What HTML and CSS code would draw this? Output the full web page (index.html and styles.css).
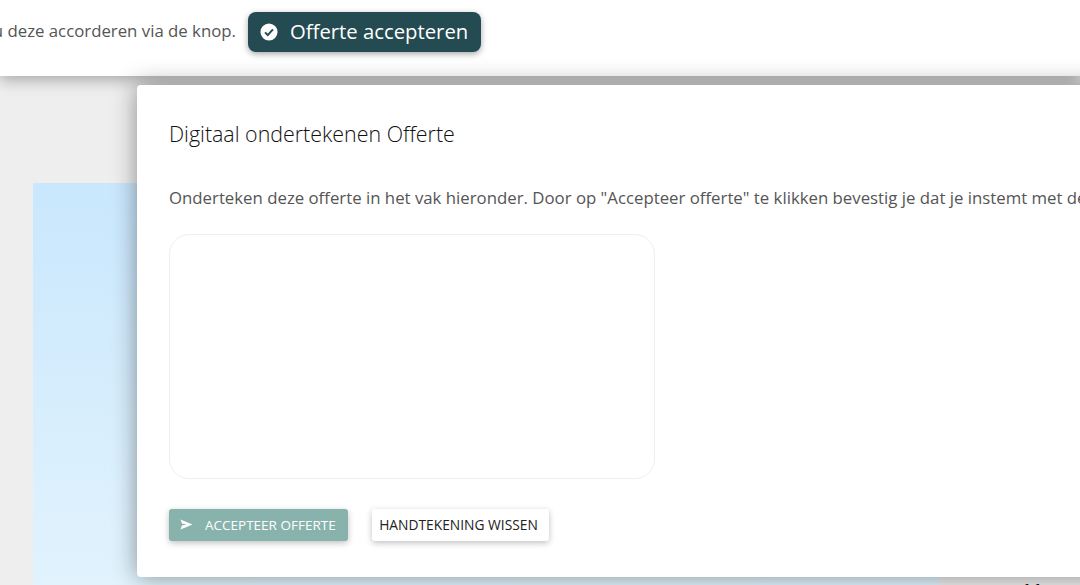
FILE: index.html
```html
<!DOCTYPE html>
<html lang="nl">
<head>
<meta charset="utf-8">
<title>Offerte</title>
<link rel="stylesheet" href="styles.css">
</head>
<body>
<div class="page">
  <header class="topbar">
    <p class="topbar-text">Je kunt nu deze accorderen via de knop.</p>
    <button class="accept-top" type="button">
      <svg class="check-icon" viewBox="0 0 20 20" width="18" height="18" aria-hidden="true">
        <circle cx="10" cy="10" r="9.5" fill="#fff"/>
        <path d="M5.6 10.4l3 3 5.8-6.4" fill="none" stroke="#254b52" stroke-width="2.2"/>
      </svg>
      <span class="accept-label">Offerte accepteren</span>
    </button>
  </header>
  <main class="backdrop">
    <div class="sheet"></div>
    <div class="side"><span class="side-number">11</span></div>
  </main>
  <section class="dialog">
    <h1 class="dialog-title">Digitaal ondertekenen Offerte</h1>
    <p class="dialog-text">Onderteken deze offerte in het vak hieronder. Door op "Accepteer offerte" te klikken bevestig je dat je instemt met de voorwaarden.</p>
    <div class="signature"></div>
    <div class="actions">
      <button class="btn btn-primary" type="button">
        <svg viewBox="0 0 14 12" width="13" height="11" aria-hidden="true"><path d="M0.5 0.5L13.5 6 0.5 11.5 2 7l5-1-5-1z" fill="#fff"/></svg>
        <span>ACCEPTEER OFFERTE</span>
      </button>
      <button class="btn btn-plain" type="button">HANDTEKENING WISSEN</button>
    </div>
  </section>
</div>
</body>
</html>
```
FILE: styles.css
```css
* { box-sizing: border-box; }
html, body { margin: 0; padding: 0; }
body { font-family: "Open Sans", "Lato", sans-serif; }
.page {
  position: relative;
  width: 1080px;
  height: 585px;
  overflow: hidden;
  background: #eeeeee;
  display: flex;
  flex-direction: column;
}
.topbar {
  position: relative;
  z-index: 2;
  flex: none;
  height: 76px;
  background: #fff;
  display: flex;
  align-items: flex-start;
  justify-content: flex-end;
  gap: 12px;
  padding: 12px 599px 0 0;
  box-shadow: 0 4px 14px rgba(0, 0, 0, .3);
}
.topbar-text {
  margin: 0;
  flex: none;
  line-height: 37px;
  font-size: 16.8px;
  color: #555;
  white-space: nowrap;
}
.accept-top {
  flex: none;
  width: 233px;
  height: 40px;
  border: 0;
  border-radius: 8px;
  background: #254b52;
  color: #fff;
  font: 20.3px "Open Sans", sans-serif;
  display: flex;
  align-items: center;
  gap: 12px;
  padding: 0 0 0 12px;
  box-shadow: 0 2px 6px rgba(0, 0, 0, .35);
}
.accept-label { padding-bottom: 3px; }
.backdrop {
  flex: 1;
  display: flex;
  padding-top: 107px;
  min-height: 0;
}
.sheet {
  margin-left: 33px;
  width: 907px;
  height: 440px;
  flex: none;
  background: linear-gradient(#c9e7fd, #e4f4fd);
}
.side {
  flex: 1;
  display: flex;
  justify-content: flex-end;
  padding: 396px 37px 0 0;
}
.side-number {
  font: bold 24px/24px "Liberation Serif", serif;
  color: #111;
}
.dialog {
  position: absolute;
  z-index: 3;
  left: 137px;
  top: 85px;
  width: 1000px;
  height: 492px;
  background: #fff;
  border-radius: 4px;
  padding: 36px 32px 0;
  box-shadow: 0 0 24px rgba(0, 0, 0, .42);
}
.dialog-title {
  margin: 0;
  font-size: 21.4px;
  font-weight: 300;
  line-height: 26px;
  color: #111;
  white-space: nowrap;
}
.dialog-text {
  margin: 39px 0 0;
  font-size: 16.8px;
  line-height: 24px;
  color: #555;
  white-space: nowrap;
}
.signature {
  margin-top: 24px;
  width: 486px;
  height: 245px;
  border: 1px solid #eee;
  border-radius: 20px;
}
.actions {
  margin-top: 30px;
  display: flex;
  gap: 24px;
}
.btn {
  height: 32px;
  border: 0;
  border-radius: 3px;
  font: 13.5px "Open Sans", sans-serif;
  line-height: 30px;
  display: flex;
  align-items: center;
  padding-bottom: 2px;
  box-shadow: 0 2px 6px rgba(0, 0, 0, .25);
}
.btn-primary {
  width: 179px;
  background: #88b3ac;
  color: #fff;
  gap: 12px;
  padding-left: 11px;
  padding-right: 0;
}
.btn-plain {
  width: 177px;
  background: #fff;
  color: #222;
  font-size: 13.8px;
  justify-content: center;
  padding-left: 0;
  padding-right: 4px;
}
```
